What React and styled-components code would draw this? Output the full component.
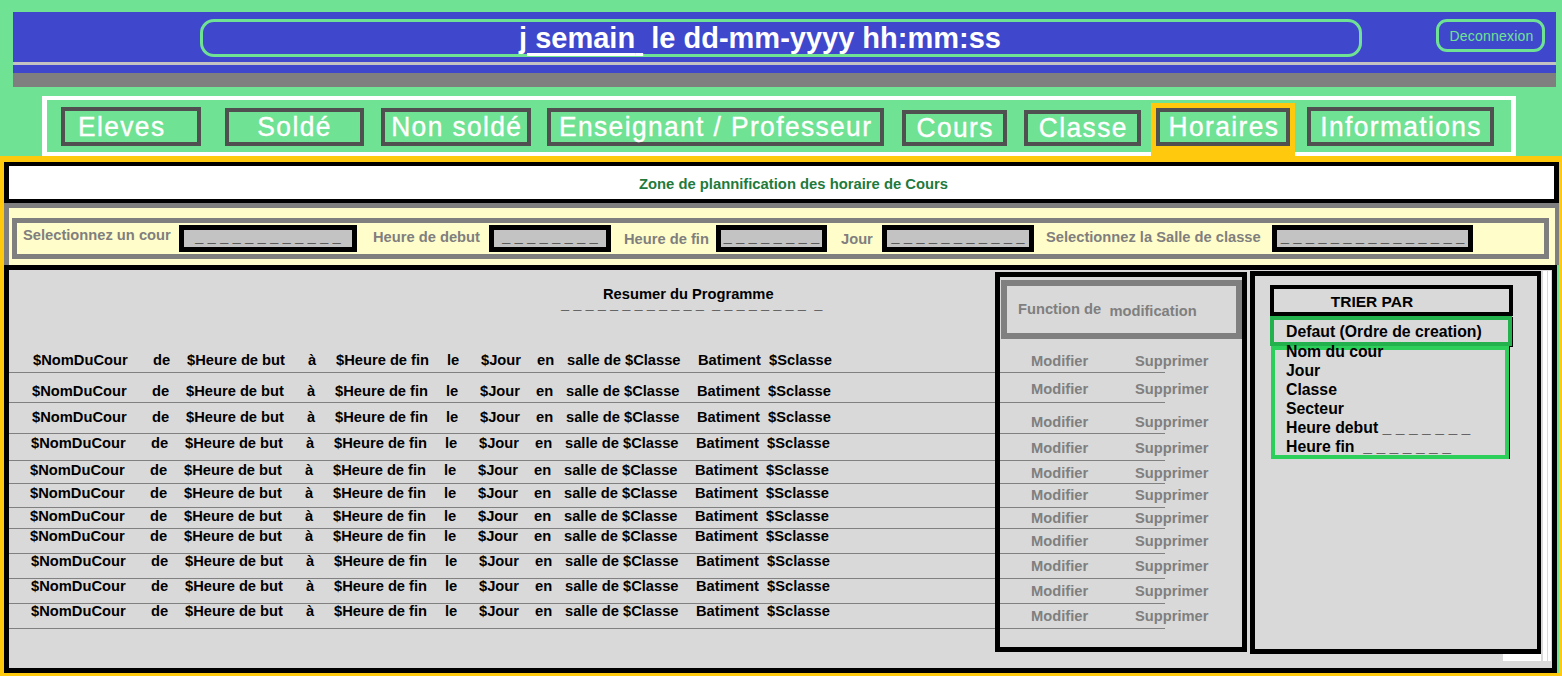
import React from 'react';
import styled, { createGlobalStyle } from 'styled-components';

const GlobalStyle = createGlobalStyle`
  html, body {
    margin: 0;
    padding: 0;
  }
  body {
    width: 1562px;
    height: 676px;
    overflow: hidden;
    background: #70e294;
    font-family: "Liberation Sans", Arial, sans-serif;
  }
  * {
    box-sizing: border-box;
  }
`;

const Page = styled.div`
  padding-top: 12px;
`;

const Header = styled.header`
  margin: 0 6px 0 13px;
  height: 75px;
  display: flex;
  align-items: flex-start;
  padding: 7px 11px 0 187px;
  background: linear-gradient(to bottom, #3f48cc 0 50px, #c3c3c3 50px 53px, #3f48cc 53px);
  border-bottom: 14px solid #7f7f7f;
`;

const TitleOval = styled.div`
  width: 1162px;
  height: 38px;
  border: 3px solid #70e294;
  border-radius: 14px;
  display: flex;
  align-items: center;
  justify-content: center;
  padding-right: 42px;
  color: #fff;
  font-size: 29px;
  font-weight: 700;
  white-space: pre;
`;

const Week = styled.span`
  text-decoration: underline;
  text-decoration-thickness: 3px;
  text-underline-offset: 5px;
`;

const Logout = styled.button`
  margin-left: auto;
  width: 109px;
  height: 33px;
  border: 3px solid #70e294;
  border-radius: 11px;
  background: transparent;
  color: #70e294;
  font: 400 14px "Liberation Sans", Arial, sans-serif;
  letter-spacing: 0.2px;
  padding: 0 0 0 2px;
`;

const Nav = styled.nav`
  margin: 9px 0 0 42px;
  width: 1474px;
  height: 60px;
  border: solid #fff;
  border-width: 4px 5px;
  display: flex;
  align-items: flex-end;
  padding: 0 0 6px 14px;
`;

const Tab = styled.button`
  margin-left: ${({ $ml }) => $ml || 0}px;
  width: ${({ $w }) => $w}px;
  height: ${({ $h }) => $h}px;
  border: 4px solid #505050;
  background: #70e294;
  color: #fff;
  display: flex;
  align-items: center;
  justify-content: ${({ $start }) => ($start ? 'flex-start' : 'center')};
  padding: 0 0 0 ${({ $start }) => ($start ? 13 : 1)}px;
  white-space: nowrap;
`;

/* narrow poster lettering of the mockup: Arial squeezed a little */
const TabText = styled.span`
  display: inline-block;
  font: 400 28px "Liberation Sans", Arial, sans-serif;
  letter-spacing: 1.5px;
  -webkit-text-stroke: 0.4px #fff;
  transform: scaleX(0.94);
  transform-origin: ${({ $start }) => ($start ? 'left' : 'center')} center;
`;

const ActiveTab = styled.div`
  margin: 0 0 -12px 10px;
  padding: 5px 5px 12px;
  background: #ffc90e;
  position: relative;
  z-index: 1;
`;

const Main = styled.main`
  height: 520px;
  border: solid #ffc90e;
  border-width: 6px 3px 3px 4px;
`;

const TitleBar = styled.div`
  height: 41px;
  border: solid #000;
  border-width: 4px 5px;
  background: #fff;
  display: flex;
  align-items: center;
  justify-content: center;
  padding: 2px 0 0 24px;
  color: #1f7a3c;
  font-size: 14.8px;
  font-weight: 700;
`;

const FilterSection = styled.section`
  height: 62px;
  border: solid #7f7f7f;
  border-width: 5px 4px 0 5px;
  background: #fffdc9;
  padding: 10px 6px 0 3px;
`;

const FilterBox = styled.div`
  height: 41px;
  border: 5px solid #7f7f7f;
  display: flex;
  align-items: center;
  padding-left: 6px;
`;

const FieldLabel = styled.span`
  margin-left: ${({ $ml }) => $ml}px;
  margin-bottom: ${({ $lift }) => $lift}px;
  width: ${({ $w }) => $w}px;
  color: #7f7f7f;
  font-size: 14.7px;
  font-weight: 700;
  white-space: nowrap;
`;

const FieldInput = styled.div`
  width: ${({ $w }) => $w}px;
  height: 27px;
  border: 5px solid #000;
  background: #c3c3c3;
  display: flex;
  align-items: flex-end;
  justify-content: center;
  padding-bottom: 3px;
  overflow: hidden;
  font-size: 15px;
  font-weight: 700;
  line-height: 1;
  white-space: pre;
`;

const Bottom = styled.section`
  height: 408px;
  margin-right: 2px;
  border: 5px solid #000;
  background: #d9d9d9;
  display: flex;
  align-items: flex-start;
`;

const Schedule = styled.div`
  width: 986px;
  flex-shrink: 0;
`;

const ScheduleHead = styled.div`
  height: 75px;
  padding: 16px 0 0 594px;
  font-size: 14.7px;
  font-weight: 700;
  line-height: 16px;
  color: #000;
`;

const Dashes = styled.div`
  margin: -6px 0 0 -42px;
  white-space: pre;
  line-height: 16px;
`;

const Row = styled.div`
  height: ${({ $h }) => $h}px;
  border-bottom: 1px solid #808080;
  padding: ${({ $pt }) => $pt}px 0 0 ${({ $shift }) => 24 + $shift}px;
  display: grid;
  grid-template-columns: 120px 34px 121px 28px 111px 34px 56px 30px 131px 71px auto;
  align-content: start;
  font-size: 14.7px;
  font-weight: 700;
  line-height: 14px;
  color: #000;
  white-space: nowrap;
`;

const FunctionPanel = styled.div`
  width: 252px;
  height: 380px;
  margin-top: 2px;
  border: 5px solid #000;
  flex-shrink: 0;
`;

const ModBox = styled.div`
  width: 241px;
  height: 59px;
  margin: 3px 0 6px 1px;
  border: 6px solid #7f7f7f;
  display: flex;
  align-items: center;
  padding-left: 11px;
  color: #7f7f7f;
  font-size: 14.7px;
  font-weight: 700;
  white-space: pre;
`;

const ModWord = styled.span`
  position: relative;
  top: ${({ $dy }) => $dy}px;
`;

const ActionRow = styled.div`
  width: 165px;
  height: ${({ $h }) => $h}px;
  border-bottom: 1px solid #808080;
  padding: ${({ $pt }) => $pt}px 0 0 31px;
  display: flex;
  color: #7f7f7f;
  font-size: 14.7px;
  font-weight: 700;
  line-height: 14px;
  white-space: nowrap;

  span:first-child {
    width: 104px;
    flex-shrink: 0;
  }
`;

const TrierColumn = styled.div`
  margin: 1px 0 0 3px;
  width: 291px;
  display: flex;
  flex-direction: column;
  flex-shrink: 0;
`;

const TrierPanel = styled.div`
  height: 383px;
  border: solid #000;
  border-width: 5px 4px 5px 5px;
  padding: 9px 0 0 15px;
`;

const TrierHead = styled.div`
  width: 243px;
  height: 31px;
  border: 4px solid #000;
  display: flex;
  align-items: center;
  justify-content: center;
  padding: 2px 39px 0 0;
  font-size: 15.5px;
  font-weight: 700;
`;

const DefaultOption = styled.div`
  width: 242px;
  height: 30px;
  border: 4px solid #22b14c;
  box-shadow: 1px 1px 0 #000;
  padding: 2px 0 0 12px;
  font-size: 15.8px;
  font-weight: 700;
  line-height: 20px;
`;

const SortList = styled.ul`
  list-style: none;
  margin: 0 0 0 1px;
  width: 238px;
  height: 113px;
  border: 4px solid #2dcf5b;
  box-shadow: 1px 0 0 #000;
  padding: 0 0 0 11px;
`;

const SortItem = styled.li`
  margin-top: ${({ $first }) => ($first ? -8 : 0)}px;
  font-size: 15.8px;
  font-weight: 700;
  line-height: 19px;
  white-space: pre;
`;

const Ledge = styled.div`
  align-self: flex-end;
  width: 38px;
  height: 7px;
  background: #fff;
`;

const Track = styled.div`
  width: 11px;
  height: 390px;
  margin-top: 1px;
  background: linear-gradient(to right, #d9d9d9 0 2px, #fff 2px 6px, #d9d9d9 6px 7px, #fff 7px 10px, #d9d9d9 10px);
`;

const tabs = [
  { label: 'Eleves', w: 140, h: 39, ml: 0, start: true },
  { label: 'Soldé', w: 139, h: 38, ml: 24 },
  { label: 'Non soldé', w: 150, h: 38, ml: 17 },
  { label: 'Enseignant / Professeur', w: 337, h: 38, ml: 16 },
  { label: 'Cours', w: 105, h: 36, ml: 18 },
  { label: 'Classe', w: 117, h: 36, ml: 17 },
  { label: 'Horaires', w: 134, h: 38, active: true },
  { label: 'Informations', w: 187, h: 39, ml: 12 },
];

const fields = [
  { label: 'Selectionnez un cour', ml: 0, lw: 156, lift: 7, iw: 178, dashes: 12 },
  { label: 'Heure de debut', ml: 16, lw: 116, lift: 3, iw: 122, dashes: 8 },
  { label: 'Heure de fin', ml: 13, lw: 92, lift: 0, iw: 111, dashes: 8 },
  { label: 'Jour', ml: 14, lw: 41, lift: 0, iw: 152, dashes: 11 },
  { label: 'Selectionnez la Salle de classe', ml: 12, lw: 226, lift: 3, iw: 201, dashes: 15 },
];

// heights follow the hand-drawn row lines of the mockup
const rows = [
  { h: 28, pt: 8, apt: 9, shift: 0 },
  { h: 30, pt: 11, apt: 9, shift: -1 },
  { h: 31, pt: 7, apt: 12, shift: -1 },
  { h: 27, pt: 2, apt: 7, shift: -2 },
  { h: 23, pt: 2, apt: 5, shift: -3 },
  { h: 24, pt: 2, apt: 4, shift: -3 },
  { h: 21, pt: 1, apt: 3, shift: -3 },
  { h: 25, pt: 0, apt: 5, shift: -3 },
  { h: 25, pt: 0, apt: 5, shift: -2 },
  { h: 25, pt: 0, apt: 5, shift: -2 },
  { h: 25, pt: 0, apt: 5, shift: -2 },
];

const cells = ['$NomDuCour', 'de', '$Heure de but', 'à', '$Heure de fin', 'le', '$Jour', 'en', 'salle de $Classe', 'Batiment', '$Sclasse'];

const sortOptions = ['Nom du cour', 'Jour', 'Classe', 'Secteur', 'Heure debut _ _ _ _ _ _ _', 'Heure fin  _ _ _ _ _ _ _'];

const dashes = (n) => Array(n).fill('_').join(' ');

function App() {
  return (
    <Page>
      <GlobalStyle />
      <Header>
        <TitleOval>
          <Week>j semain{'\u00a0'}</Week>{' le dd-mm-yyyy hh:mm:ss'}
        </TitleOval>
        <Logout>Deconnexion</Logout>
      </Header>

      <Nav>
        {tabs.map((t) =>
          t.active ? (
            <ActiveTab key={t.label}>
              <Tab $w={t.w} $h={t.h}>
                <TabText>{t.label}</TabText>
              </Tab>
            </ActiveTab>
          ) : (
            <Tab key={t.label} $w={t.w} $h={t.h} $ml={t.ml} $start={t.start}>
              <TabText $start={t.start}>{t.label}</TabText>
            </Tab>
          )
        )}
      </Nav>

      <Main>
        <TitleBar>Zone de plannification des horaire de Cours</TitleBar>

        <FilterSection>
          <FilterBox>
            {fields.map((f) => (
              <React.Fragment key={f.label}>
                <FieldLabel $ml={f.ml} $w={f.lw} $lift={f.lift}>{f.label}</FieldLabel>
                <FieldInput $w={f.iw}>{dashes(f.dashes)}</FieldInput>
              </React.Fragment>
            ))}
          </FilterBox>
        </FilterSection>

        <Bottom>
          <Schedule>
            <ScheduleHead>
              Resumer du Programme
              <Dashes>{dashes(12) + '  ' + dashes(8) + '  _'}</Dashes>
            </ScheduleHead>
            {rows.map((r, i) => (
              <Row key={i} $h={r.h} $pt={r.pt} $shift={r.shift}>
                {cells.map((c) => (
                  <span key={c}>{c}</span>
                ))}
              </Row>
            ))}
          </Schedule>

          <FunctionPanel>
            <ModBox>
              <ModWord $dy={-1}>Function de  </ModWord>
              <ModWord $dy={1}>modification</ModWord>
            </ModBox>
            {rows.map((r, i) => (
              <ActionRow key={i} $h={r.h} $pt={r.apt}>
                <span>Modifier</span>
                <span>Supprimer</span>
              </ActionRow>
            ))}
          </FunctionPanel>

          <TrierColumn>
            <TrierPanel>
              <TrierHead>TRIER PAR</TrierHead>
              <DefaultOption>Defaut (Ordre de creation)</DefaultOption>
              <SortList>
                {sortOptions.map((o, i) => (
                  <SortItem key={o} $first={i === 0}>{o}</SortItem>
                ))}
              </SortList>
            </TrierPanel>
            <Ledge />
          </TrierColumn>

          <Track />
        </Bottom>
      </Main>
    </Page>
  );
}

export default App;
